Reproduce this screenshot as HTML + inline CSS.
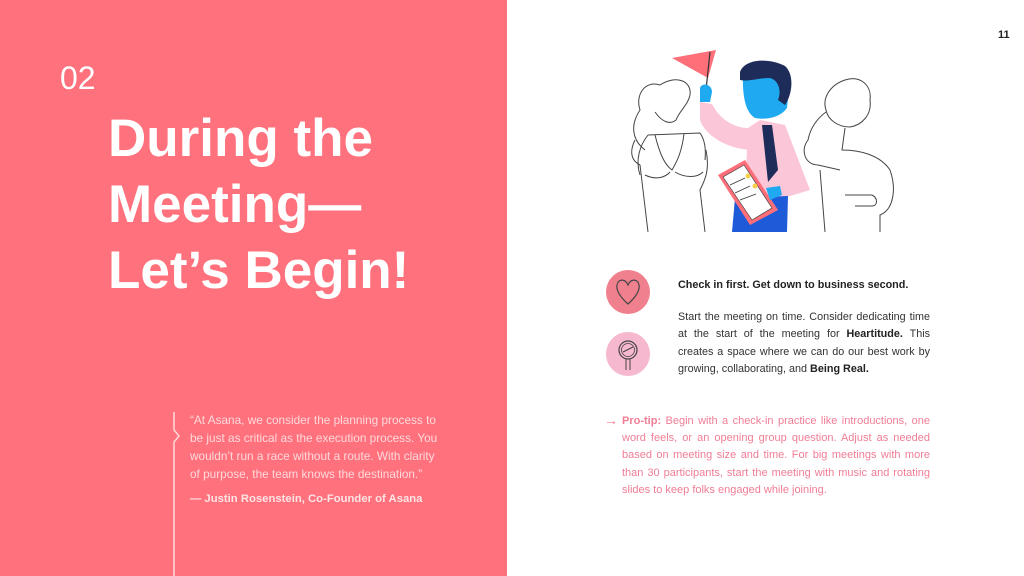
<!DOCTYPE html>
<html><head><meta charset="utf-8"><style>
*{margin:0;padding:0;box-sizing:border-box}
body{width:1024px;height:576px;overflow:hidden;background:#fff;font-family:"Liberation Sans",sans-serif;position:relative}
.left{position:absolute;left:0;top:0;width:507px;height:576px;background:#FF717C}
.num{position:absolute;left:60px;top:60px;color:#fff;font-size:32px}
.title{position:absolute;left:108px;top:106px;color:#fff;font-size:53px;font-weight:bold;line-height:66px;letter-spacing:0px}
.quote{position:absolute;left:190px;top:411px;width:252px;color:#FFD9DC;font-size:11.8px;line-height:18px}
.auth{position:absolute;left:190px;top:493px;color:#FFE4E6;font-size:11.3px;font-weight:bold}
.pg{position:absolute;left:998px;top:29px;font-size:11px;font-weight:bold;color:#222}
.h{position:absolute;left:678px;top:279px;font-size:10.8px;font-weight:bold;color:#222}
.body{position:absolute;left:678px;top:309px;width:252px;font-size:10.8px;line-height:17.3px;color:#333;text-align:justify}
.tip{position:absolute;left:622px;top:413px;width:308px;font-size:11px;line-height:17.2px;color:#F07D95;text-align:justify}
</style></head><body>
<div class="left"></div>
<div class="num">02</div>
<div class="title">During the<br>Meeting—<br>Let’s Begin!</div>
<svg style="position:absolute;left:165px;top:410px" width="20" height="166"><path d="M9 2 V20 L14 26 L9 32 V166" stroke="#FFD9DC" stroke-width="1.5" fill="none"/></svg>
<div class="quote">“At Asana, we consider the planning process to be just as critical as the execution process. You wouldn’t run a race without a route. With clarity of purpose, the team knows the destination.”</div>
<div class="auth">— Justin Rosenstein, Co-Founder of Asana</div>
<div class="pg">11</div>
<svg style="position:absolute;left:620px;top:40px" width="290" height="193" viewBox="620 40 290 193" fill="none" stroke="#444" stroke-width="1">
<path d="M660 85 C645 80 635 95 640 110 C630 125 632 140 645 150"/>
<path d="M660 85 C675 75 692 80 690 95 C688 105 680 110 676 120 C670 125 662 122 655 112"/>
<path d="M635 140 C630 150 630 160 640 165 L648 232 M706 150 C710 170 705 180 700 190 L705 232"/>
<path d="M648 135 L700 133 C705 140 706 150 705 160 M648 135 C640 145 635 160 640 175"/>
<path d="M655 135 C660 155 665 165 672 170 C678 160 682 150 684 134"/>
<path d="M645 175 C655 180 665 178 670 172 M675 172 C685 178 697 178 703 172"/>
<path d="M845 80 C860 75 872 85 870 100 C872 115 862 125 850 127 C838 127 828 120 826 110 C822 98 830 85 845 80Z"/>
<path d="M826 112 C815 120 810 130 808 140 C800 150 805 165 818 165 L840 170"/>
<path d="M845 128 L842 150 C860 150 880 155 890 170 C897 190 893 210 880 215 L880 232 M820 170 L825 232 M845 195 L872 195 C878 198 878 206 872 206 L855 206"/>
<path d="M672 58 L716 50 L708 78 Z" fill="#FF6F7A" stroke="none"/>
<path d="M710 52 L706 90" stroke="#333" stroke-width="1.2"/>
<path d="M700 88 C702 82 712 84 712 92 L710 102 L700 102Z" fill="#1FA9F0" stroke="none"/>
<path d="M700 102 L712 104 C720 120 735 128 748 128 L750 150 C725 148 705 135 700 120Z" fill="#FBC6D8" stroke="none"/>
<path d="M743 70 C748 60 785 60 790 80 L787 108 C780 118 765 120 755 118 C745 112 742 95 743 70Z" fill="#1FA9F0" stroke="none"/>
<path d="M740 72 C745 58 770 58 785 66 C795 75 792 95 785 105 L778 100 C782 90 778 80 770 78 C758 78 748 82 740 80Z" fill="#1E2C5A" stroke="none"/>
<path d="M760 120 L785 125 L810 190 L770 202 L745 195 L748 128 Z" fill="#FBC6D8" stroke="none"/>
<path d="M762 125 L772 125 L778 170 L768 182 Z" fill="#1E2C5A" stroke="none"/>
<path d="M735 198 L788 196 L787 232 L732 232 Z" fill="#1E5BD8" stroke="none"/>
<path d="M718 175 L745 160 L778 210 L750 225 Z" fill="#FF6F7A" stroke="none"/>
<path d="M723 177 L744 165 L772 208 L752 220 Z" fill="#fff" stroke="#333" stroke-width="0.6"/>
<circle cx="748" cy="176" r="2.5" fill="#F7D14A" stroke="none"/><circle cx="755" cy="186" r="2.5" fill="#F7D14A" stroke="none"/>
<path d="M730 185 L745 178 M735 193 L750 186 M740 200 L756 194" stroke="#333" stroke-width="0.7"/>
<path d="M766 188 L780 186 L782 195 L770 200 Z" fill="#1FA9F0" stroke="none"/>
</svg>
<svg style="position:absolute;left:606px;top:270px" width="44" height="108">
<circle cx="22" cy="22" r="22" fill="#F0808E"/>
<path d="M22 34 C14 27 10 20 11 15 C12 9 19 8 22 15 C25 8 32 9 33 15 C34 20 30 27 22 34Z" fill="none" stroke="#444" stroke-width="1.2"/>
<circle cx="22" cy="84" r="22" fill="#F6B8CE"/>
<circle cx="22" cy="80" r="9" fill="none" stroke="#444" stroke-width="1.2"/><circle cx="22" cy="80" r="6.5" fill="none" stroke="#444" stroke-width="0.8"/><path d="M17 82 L27 77 M20 89 V100 M24 89 V100" stroke="#444" stroke-width="1"/>
</svg>
<div class="h">Check in first. Get down to business second.</div>
<div class="body">Start the meeting on time. Consider dedicating time at the start of the meeting for <b style="color:#222">Heartitude.</b> This creates a space where we can do our best work by growing, collaborating, and <b style="color:#222">Being Real.</b></div>
<div class="tip"><span style="position:absolute;left:-18px;top:-1px;font-size:14px">→</span><b>Pro-tip:</b> Begin with a check-in practice like introductions, one word feels, or an opening group question. Adjust as needed based on meeting size and time. For big meetings with more than 30 participants, start the meeting with music and rotating slides to keep folks engaged while joining.</div>
</body></html>
